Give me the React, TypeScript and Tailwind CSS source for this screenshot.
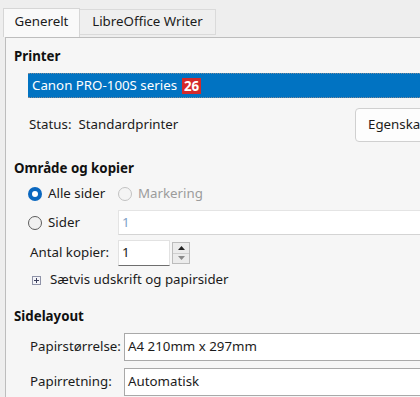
import React from 'react';

const font = { fontFamily: '"Noto Sans", "Liberation Sans", sans-serif' };

const Radio = ({ checked, disabled }: { checked?: boolean; disabled?: boolean }) => {
  if (checked) {
    return (
      <span className="w-[14px] h-[14px] rounded-full bg-[#0a67bf] flex items-center justify-center shrink-0">
        <span className="w-[6px] h-[6px] rounded-full bg-white" />
      </span>
    );
  }
  return (
    <span
      className={
        disabled
          ? 'w-[14px] h-[14px] rounded-full border border-[#c2c2c2] bg-[#f4f4f4] shrink-0'
          : 'w-[14px] h-[14px] rounded-full border border-[#5c5c5c] bg-[#f1f1f1] shrink-0'
      }
    />
  );
};

const Heading = ({ children }: { children: React.ReactNode }) => (
  <div className="pl-[8px] font-bold text-[13.3px] text-[#111]">{children}</div>
);

export default function App() {
  return (
    <div
      className="w-[420px] h-[397px] overflow-hidden bg-[#eeeeee] flex flex-col text-[13.3px] text-[#1b1b1b]"
      style={font}
    >
      {/* tabs */}
      <div className="h-[37px] flex items-end pl-[3px] shrink-0">
        <div className="h-[29px] w-[77px] border border-b-0 border-[#d6d6d6] bg-[#f9f9f9] flex items-center justify-center pb-[2px]">
          Generelt
        </div>
        <div className="h-[26px] w-[136px] mb-[2px] border border-l-0 border-[#dadada] bg-[#efefef] flex items-center justify-center">
          LibreOffice Writer
        </div>
      </div>

      {/* panel */}
      <div className="flex-1 ml-[5px] border-l border-t border-[#bdbdbd] bg-[#f6f6f6] flex flex-col overflow-hidden">
        <div className="h-[35px] flex items-center pt-[3px]">
          <Heading>Printer</Heading>
        </div>

        <div className="h-[25px] ml-[22px] bg-[#0173c2] border-y border-dotted border-[#7d8a96] flex items-center pl-[4px] text-white whitespace-nowrap">
          <span>Canon PRO-100S series</span>
          <span className="ml-[5px] bg-[#d42a2a] font-bold px-[2px] leading-[16px]">26</span>
        </div>

        <div className="mt-[10px] h-[34px] flex items-center whitespace-nowrap">
          <div className="w-[349px] pl-[23px] shrink-0">
            Status:&nbsp;&nbsp;Standardprinter
          </div>
          <div className="w-[80px] h-[34px] shrink-0 rounded-[4px] border border-[#d0d0d0] bg-[#fdfdfd] flex items-center pl-[12px] overflow-hidden">
            Egenska
          </div>
        </div>

        <div className="mt-[16px] h-[22px] flex items-center">
          <Heading>Område og kopier</Heading>
        </div>

        <div className="mt-[2px] h-[24px] flex items-center pl-[22px] whitespace-nowrap">
          <Radio checked />
          <span className="ml-[6px] w-[70px]">Alle sider</span>
          <Radio disabled />
          <span className="ml-[6px] text-[#9c9c9c]">Markering</span>
        </div>

        <div className="mt-[4px] h-[25px] flex items-center pl-[22px]">
          <Radio />
          <span className="ml-[6px] w-[70px]">Sider</span>
          <div className="flex-1 -mr-[4px] h-[25px] bg-white border border-r-0 border-[#e4e4e4] border-b-[#d4d4d4] flex items-center pl-[3px] text-[#7f9fc6]">
            1
          </div>
        </div>

        <div className="mt-[5px] h-[26px] flex items-center pl-[24px]">
          <span className="w-[88px]">Antal kopier:</span>
          <div className="w-[52px] h-[26px] bg-white border border-[#e2e2e2] border-b-[#6e6e6e] flex items-center pl-[3px]">
            1
          </div>
          <div className="ml-[2px] w-[18px] h-[22px] flex flex-col border border-[#bcbcbc] bg-[#ececec]">
            <div className="flex-1 flex items-center justify-center border-b border-[#cfcfcf]">
              <svg width="7" height="4" viewBox="0 0 7 4">
                <path d="M0 4 L3.5 0 L7 4 Z" fill="#222" />
              </svg>
            </div>
            <div className="flex-1 flex items-center justify-center">
              <svg width="7" height="4" viewBox="0 0 7 4">
                <path d="M0 0 L3.5 4 L7 0 Z" fill="#8a8a8a" />
              </svg>
            </div>
          </div>
        </div>

        <div className="mt-[4px] h-[20px] flex items-center pl-[26px] whitespace-nowrap">
          <svg width="9" height="9" viewBox="0 0 9 9" className="shrink-0">
            <rect x="0.5" y="0.5" width="8" height="8" fill="#f4f4f8" stroke="#8f93a8" />
            <path d="M2 4.5 H7 M4.5 2 V7" stroke="#3a3f5c" strokeWidth="1" />
          </svg>
          <span className="ml-[9px]">Sætvis udskrift og papirsider</span>
        </div>

        <div className="mt-[16px] h-[22px] flex items-center">
          <Heading>Sidelayout</Heading>
        </div>

        <div className="mt-[5px] h-[28px] flex items-center pl-[24px] whitespace-nowrap">
          <span className="w-[94px] shrink-0">Papirstørrelse:</span>
          <div className="flex-1 -mr-[4px] h-[28px] bg-white border border-r-0 border-[#a9a9a9] flex items-center pl-[3px]">
            A4 210mm x 297mm
          </div>
        </div>

        <div className="mt-[7px] h-[28px] flex items-center pl-[24px] whitespace-nowrap">
          <span className="w-[94px] shrink-0">Papirretning:</span>
          <div className="flex-1 -mr-[4px] h-[28px] bg-white border border-r-0 border-[#a9a9a9] flex items-center pl-[3px]">
            Automatisk
          </div>
        </div>
      </div>
    </div>
  );
}
